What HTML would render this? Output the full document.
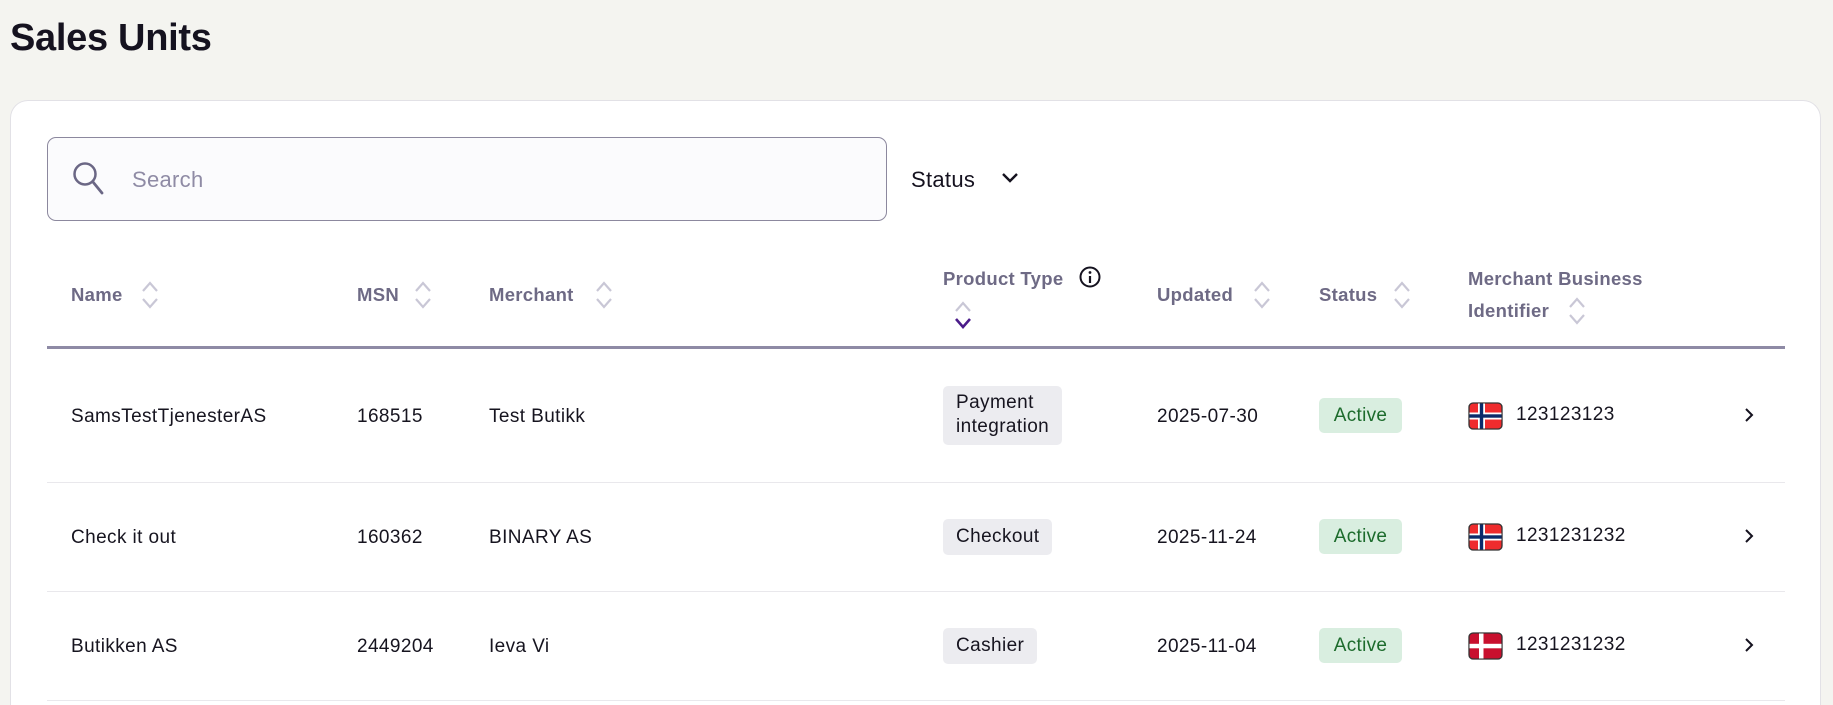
<!DOCTYPE html>
<html><head><meta charset="utf-8"><style>
*{box-sizing:border-box;margin:0;padding:0}
html,body{width:1833px;height:705px;overflow:hidden}
body{background:#f4f4f0;font-family:"Liberation Sans",sans-serif;color:#1a1a2a;position:relative}
.abs{position:absolute}
h1{position:absolute;left:10px;top:17px;font-size:38px;font-weight:700;color:#15121f;letter-spacing:-0.3px}
.card{position:absolute;left:10px;top:100px;width:1811px;height:605px;background:#fff;border:1px solid #e2e1e6;border-bottom:none;border-radius:18px 18px 0 0}
.search{position:absolute;left:47px;top:137px;width:840px;height:84px;border:1px solid #8c889e;border-radius:9px;background:#fbfbfd}
.hd{position:absolute;font-size:18.5px;font-weight:700;color:#6e6a85;white-space:nowrap;letter-spacing:0.3px}
.cell{position:absolute;font-size:19px;color:#16141f;white-space:nowrap;transform:translateY(-50%);letter-spacing:0.4px}
.sep{position:absolute;left:47px;width:1738px;height:1px;background:#e9e8ec}
.badge{position:absolute;background:#ececf0;border-radius:5px;font-size:19px;color:#16141f;padding:0 13px;line-height:24px;letter-spacing:0.4px}
.act{position:absolute;left:1319px;width:83px;height:35px;background:#d9eee0;border-radius:5px;color:#1c6b2c;font-size:19px;line-height:35px;text-align:center;letter-spacing:0.3px}
svg{position:absolute}
</style></head><body>
<h1>Sales Units</h1>
<div class="card"></div>
<div class="search"></div>
<svg style="left:72px;top:161px" width="34" height="36" viewBox="0 0 34 36"><circle cx="13" cy="13" r="10.5" fill="none" stroke="#6b6785" stroke-width="2.5"/><path d="M21 21 L30 32" stroke="#6b6785" stroke-width="2.8" stroke-linecap="round"/></svg>
<div class="abs" style="left:132px;top:167px;font-size:22px;color:#8f8ba5;letter-spacing:0.3px">Search</div>
<div class="abs" style="left:911px;top:167px;font-size:22px;color:#15121f;letter-spacing:0.3px">Status</div>
<svg style="left:1001px;top:172px" width="18" height="12" viewBox="0 0 18 12"><path d="M2 2 L9 9 L16 2" fill="none" stroke="#15121f" stroke-width="2.4"/></svg>

<div class="hd" style="left:71px;top:284px">Name</div>
<div class="hd" style="left:357px;top:284px">MSN</div>
<div class="hd" style="left:489px;top:284px">Merchant</div>
<div class="hd" style="left:943px;top:268px">Product Type</div>
<div class="hd" style="left:1157px;top:284px">Updated</div>
<div class="hd" style="left:1319px;top:284px">Status</div>
<div class="hd" style="left:1468px;top:268px">Merchant Business</div>
<div class="hd" style="left:1468px;top:300px">Identifier</div>
<svg style="left:1079px;top:266px" width="22" height="22" viewBox="0 0 22 22"><circle cx="11" cy="11" r="9.5" fill="none" stroke="#15121f" stroke-width="2"/><circle cx="11" cy="6.5" r="1.4" fill="#15121f"/><path d="M11 10v7" stroke="#15121f" stroke-width="2.2"/></svg>
<svg style="left:140px;top:280px" width="20" height="30" viewBox="0 0 20 30"><path d="M3 11 L10 3 L17 11 M3 19 L10 27 L17 19" fill="none" stroke="#c9c7d6" stroke-width="2.2"/></svg>
<svg style="left:413px;top:280px" width="20" height="30" viewBox="0 0 20 30"><path d="M3 11 L10 3 L17 11 M3 19 L10 27 L17 19" fill="none" stroke="#c9c7d6" stroke-width="2.2"/></svg>
<svg style="left:594px;top:280px" width="20" height="30" viewBox="0 0 20 30"><path d="M3 11 L10 3 L17 11 M3 19 L10 27 L17 19" fill="none" stroke="#c9c7d6" stroke-width="2.2"/></svg>
<svg style="left:953px;top:300px" width="20" height="30" viewBox="0 0 20 30"><path d="M3 11 L10 3 L17 11" fill="none" stroke="#c9c7d6" stroke-width="2.2"/><path d="M3 19 L10 27 L17 19" fill="none" stroke="#4b1c8a" stroke-width="2.6"/></svg>
<svg style="left:1252px;top:280px" width="20" height="30" viewBox="0 0 20 30"><path d="M3 11 L10 3 L17 11 M3 19 L10 27 L17 19" fill="none" stroke="#c9c7d6" stroke-width="2.2"/></svg>
<svg style="left:1392px;top:280px" width="20" height="30" viewBox="0 0 20 30"><path d="M3 11 L10 3 L17 11 M3 19 L10 27 L17 19" fill="none" stroke="#c9c7d6" stroke-width="2.2"/></svg>
<svg style="left:1567px;top:296px" width="20" height="30" viewBox="0 0 20 30"><path d="M3 11 L10 3 L17 11 M3 19 L10 27 L17 19" fill="none" stroke="#c9c7d6" stroke-width="2.2"/></svg>

<div class="abs" style="left:47px;top:346px;width:1738px;height:3px;background:#8e8aa5"></div>

<div class="cell" style="left:71px;top:417px">SamsTestTjenesterAS</div>
<div class="cell" style="left:357px;top:417px">168515</div>
<div class="cell" style="left:489px;top:417px">Test Butikk</div>
<div class="badge" style="left:943px;top:386px;height:59px;padding-top:5px">Payment<br>integration</div>
<div class="cell" style="left:1157px;top:417px">2025-07-30</div>
<div class="act" style="top:398px">Active</div>
<svg style="left:1468px;top:402px" width="35" height="28" viewBox="0 0 35 28"><rect x="1" y="1" width="33" height="26" rx="4" fill="#ef2b2d" stroke="#333" stroke-width="1.3"/><rect x="10" y="1.5" width="7" height="25" fill="#fff"/><rect x="1.5" y="10.5" width="32" height="7" fill="#fff"/><rect x="11.8" y="1.5" width="3.4" height="25" fill="#0b2a6a"/><rect x="1.5" y="12.3" width="32" height="3.4" fill="#0b2a6a"/></svg>
<div class="cell" style="left:1516px;top:415px">123123123</div>
<svg style="left:1743px;top:407px" width="12" height="16" viewBox="0 0 12 16"><path d="M3 2 L9 8 L3 14" fill="none" stroke="#15121f" stroke-width="2"/></svg>
<div class="sep" style="top:482px"></div>

<div class="cell" style="left:71px;top:538px">Check it out</div>
<div class="cell" style="left:357px;top:538px">160362</div>
<div class="cell" style="left:489px;top:538px">BINARY AS</div>
<div class="badge" style="left:943px;top:519px;height:36px;line-height:36px">Checkout</div>
<div class="cell" style="left:1157px;top:538px">2025-11-24</div>
<div class="act" style="top:519px">Active</div>
<svg style="left:1468px;top:523px" width="35" height="28" viewBox="0 0 35 28"><rect x="1" y="1" width="33" height="26" rx="4" fill="#ef2b2d" stroke="#333" stroke-width="1.3"/><rect x="10" y="1.5" width="7" height="25" fill="#fff"/><rect x="1.5" y="10.5" width="32" height="7" fill="#fff"/><rect x="11.8" y="1.5" width="3.4" height="25" fill="#0b2a6a"/><rect x="1.5" y="12.3" width="32" height="3.4" fill="#0b2a6a"/></svg>
<div class="cell" style="left:1516px;top:536px">1231231232</div>
<svg style="left:1743px;top:528px" width="12" height="16" viewBox="0 0 12 16"><path d="M3 2 L9 8 L3 14" fill="none" stroke="#15121f" stroke-width="2"/></svg>
<div class="sep" style="top:591px"></div>

<div class="cell" style="left:71px;top:647px">Butikken AS</div>
<div class="cell" style="left:357px;top:647px">2449204</div>
<div class="cell" style="left:489px;top:647px">Ieva Vi</div>
<div class="badge" style="left:943px;top:628px;height:36px;line-height:36px">Cashier</div>
<div class="cell" style="left:1157px;top:647px">2025-11-04</div>
<div class="act" style="top:628px">Active</div>
<svg style="left:1468px;top:632px" width="35" height="28" viewBox="0 0 35 28"><rect x="1" y="1" width="33" height="26" rx="4" fill="#c8102e" stroke="#333" stroke-width="1.3"/><rect x="11" y="1.5" width="4.5" height="25" fill="#fff"/><rect x="1.5" y="11.8" width="32" height="4.5" fill="#fff"/></svg>
<div class="cell" style="left:1516px;top:645px">1231231232</div>
<svg style="left:1743px;top:637px" width="12" height="16" viewBox="0 0 12 16"><path d="M3 2 L9 8 L3 14" fill="none" stroke="#15121f" stroke-width="2"/></svg>
<div class="sep" style="top:700px"></div>
</body></html>
